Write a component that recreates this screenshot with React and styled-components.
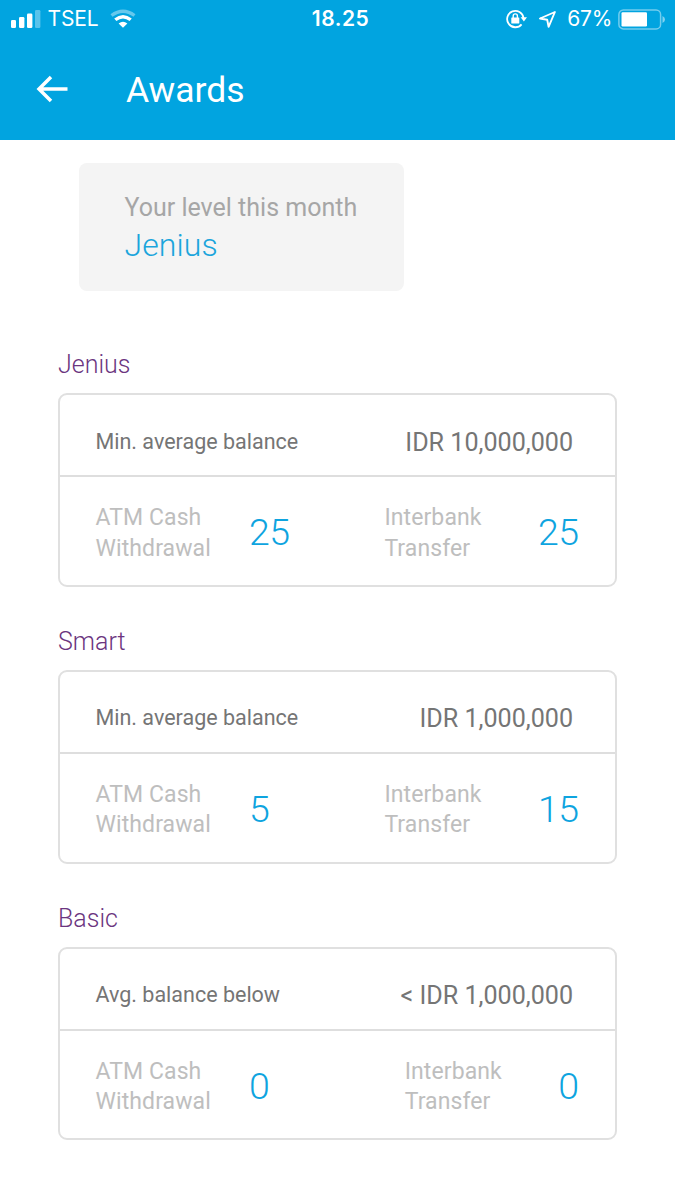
import React from "react";
import styled, { createGlobalStyle } from "styled-components";

const GlobalStyle = createGlobalStyle`
  * { box-sizing: border-box; }
  body { margin: 0; background: #fff; font-family: Roboto, sans-serif; }
`;

const Screen = styled.div`
  width: 675px;
  height: 1200px;
  overflow: hidden;
  background: #fff;
`;

const Header = styled.header`
  height: 140px;
  background: #01a4e0;
  color: #fff;
`;

const StatusBar = styled.div`
  display: grid;
  grid-template-columns: 1fr auto 1fr;
  align-items: center;
  height: 38px;
  padding: 0 9px 0 11px;
  font-family: Inter, sans-serif;
  font-size: 21px;
  line-height: 38px;
`;

const StatusGroup = styled.div`
  display: flex;
  align-items: center;
  justify-content: ${(p) => (p.$end ? "flex-end" : "flex-start")};
  height: 38px;
`;

const Carrier = styled.span`
  margin: 0 11.5px 0 6.5px;
  font-size: 21px;
  letter-spacing: -0.1px;
`;

const Clock = styled.span`
  padding-left: 4px;
  font-weight: 600;
  font-size: 21px;
  letter-spacing: 0.5px;
`;

const Percent = styled.span`
  margin: 0 6px 0 11px;
  font-size: 21px;
  letter-spacing: -0.3px;
`;

const TitleBar = styled.div`
  display: flex;
  align-items: center;
  height: 102px;
  padding-left: 36px;
`;

const Title = styled.h1`
  margin: 2px 0 0 58px;
  font-size: 35.5px;
  line-height: 42px;
  font-weight: 400;
`;

const LevelCard = styled.section`
  width: 325px;
  height: 128px;
  margin: 23px 0 0 79px;
  padding: 29px 0 0 45.5px;
  border-radius: 8px;
  background: #f4f4f4;
`;

const LevelCaption = styled.div`
  font-size: 25px;
  line-height: 32px;
  color: #a6a6a6;
`;

const LevelName = styled.div`
  font-size: 32px;
  line-height: 42px;
  font-weight: 300;
  letter-spacing: 0.1px;
  color: #1ba5dc;
`;

const Tiers = styled.main`
  display: flex;
  flex-direction: column;
  gap: 36px;
  padding: 55px 58px 0;
`;

const TierTitle = styled.h2`
  margin: 0;
  padding: 1px 0 10px;
  font-size: 25px;
  line-height: 36px;
  font-weight: 300;
  color: #6b3580;
`;

const TierBox = styled.div`
  height: 193.8px;
  border: 2px solid #e0e0e0;
  border-radius: 9px;
`;

const BalanceRow = styled.div`
  display: flex;
  align-items: center;
  justify-content: space-between;
  height: 82px;
  padding: 12px 42px 0 35.5px;
  border-bottom: 2px solid #dedede;
  color: #757575;
`;

const BalanceLabel = styled.span`
  font-size: 21.5px;
`;

const BalanceValue = styled.span`
  padding-top: 2px;
  font-size: 25.1px;
`;

const QuotaRow = styled.div`
  display: flex;
  justify-content: space-between;
  padding: 26px 36.5px 0 35.5px;
`;

const Quota = styled.div`
  display: flex;
`;

const QuotaLabel = styled.span`
  width: 153.5px;
  font-size: 23px;
  line-height: 30.5px;
  letter-spacing: 0.1px;
  color: #bebebe;
`;

const QuotaValue = styled.span`
  margin-top: -1px;
  font-size: 37.5px;
  line-height: 61px;
  font-weight: 300;
  letter-spacing: -0.5px;
  color: #0ea4df;
`;

const tiers = [
  { name: "Jenius", label: "Min. average balance", balance: "IDR 10,000,000", atm: 25, transfer: 25 },
  { name: "Smart", label: "Min. average balance", balance: "IDR 1,000,000", atm: 5, transfer: 15 },
  { name: "Basic", label: "Avg. balance below", balance: "< IDR 1,000,000", atm: 0, transfer: 0 },
];

const SignalIcon = () => (
  <svg width="30" height="18" viewBox="0 0 30 18" fill="#fff">
    <rect x="0" y="10" width="5" height="8" rx="1.3" />
    <rect x="8" y="7" width="5.4" height="11" rx="1.3" />
    <rect x="16" y="3.5" width="5.4" height="14.5" rx="1.3" />
    <rect x="24" y="0" width="5.4" height="18" rx="1.3" opacity=".35" />
  </svg>
);

const WifiIcon = () => (
  <svg width="26" height="20" viewBox="0 0 26 20" fill="none" stroke="#fff" strokeWidth="3.4">
    <path d="M1.5 6.5Q13 -2 24.5 6.5" opacity=".4" />
    <path d="M5.3 10.8Q13 4.5 20.7 10.8" />
    <path d="M8.6 14.5Q13 10.8 17.4 14.5L13 18.8Z" fill="#fff" stroke="none" />
  </svg>
);

const RotationLockIcon = () => (
  <svg width="21" height="20" viewBox="0 0 21 20" fill="none" stroke="#fff" strokeWidth="1.8">
    <path d="M17.5 9A8.2 8.2 0 1 0 15.6 15.4" />
    <path d="M14.6 8.3H21L17.9 12.5Z" fill="#fff" stroke="none" />
    <rect x="5.3" y="8.5" width="8" height="6" rx=".6" fill="#fff" stroke="none" />
    <path d="M7.2 9V7A2.1 2.1 0 0 1 11.4 7V9" strokeWidth="1.4" />
  </svg>
);

const LocationIcon = () => (
  <svg width="17" height="17" viewBox="0 0 17 17" fill="none" stroke="#fff" strokeWidth="1.9" strokeLinejoin="round">
    <path d="M15.9 1L1 7.5L8.2 8.8L9.6 15.9Z" />
  </svg>
);

const BatteryIcon = () => (
  <svg width="48" height="21" viewBox="0 0 48 21" fill="none">
    <rect x=".9" y=".9" width="41.7" height="19" rx="4.5" stroke="#fff" strokeWidth="1.5" opacity=".45" />
    <rect x="3.5" y="3.3" width="25.5" height="14.2" rx="1.2" fill="#fff" />
    <path d="M44.5 7V14Q47 12.7 47 10.5T44.5 7Z" fill="#fff" opacity=".5" />
  </svg>
);

const BackIcon = () => (
  <svg width="32" height="28" viewBox="0 0 32 28" fill="none" stroke="#fff" strokeWidth="3.5">
    <path d="M2.5 14H31.5M15 2L3 14L15 26" />
  </svg>
);

const LockSlot = styled.span`
  display: flex;
  margin-right: 12px;
`;

const QuotaItem = ({ lines, value }) => (
  <Quota>
    <QuotaLabel>
      {lines[0]}
      <br />
      {lines[1]}
    </QuotaLabel>
    <QuotaValue>{value}</QuotaValue>
  </Quota>
);

export default function App() {
  return (
    <Screen>
      <GlobalStyle />
      <Header>
        <StatusBar>
          <StatusGroup>
            <SignalIcon />
            <Carrier>TSEL</Carrier>
            <WifiIcon />
          </StatusGroup>
          <Clock>18.25</Clock>
          <StatusGroup $end>
            <LockSlot>
              <RotationLockIcon />
            </LockSlot>
            <LocationIcon />
            <Percent>67%</Percent>
            <BatteryIcon />
          </StatusGroup>
        </StatusBar>
        <TitleBar>
          <BackIcon />
          <Title>Awards</Title>
        </TitleBar>
      </Header>
      <LevelCard>
        <LevelCaption>Your level this month</LevelCaption>
        <LevelName>Jenius</LevelName>
      </LevelCard>
      <Tiers>
        {tiers.map((t) => (
          <section key={t.name}>
            <TierTitle>{t.name}</TierTitle>
            <TierBox>
              <BalanceRow>
                <BalanceLabel>{t.label}</BalanceLabel>
                <BalanceValue>{t.balance}</BalanceValue>
              </BalanceRow>
              <QuotaRow>
                <QuotaItem lines={["ATM Cash", "Withdrawal"]} value={t.atm} />
                <QuotaItem lines={["Interbank", "Transfer"]} value={t.transfer} />
              </QuotaRow>
            </TierBox>
          </section>
        ))}
      </Tiers>
    </Screen>
  );
}
